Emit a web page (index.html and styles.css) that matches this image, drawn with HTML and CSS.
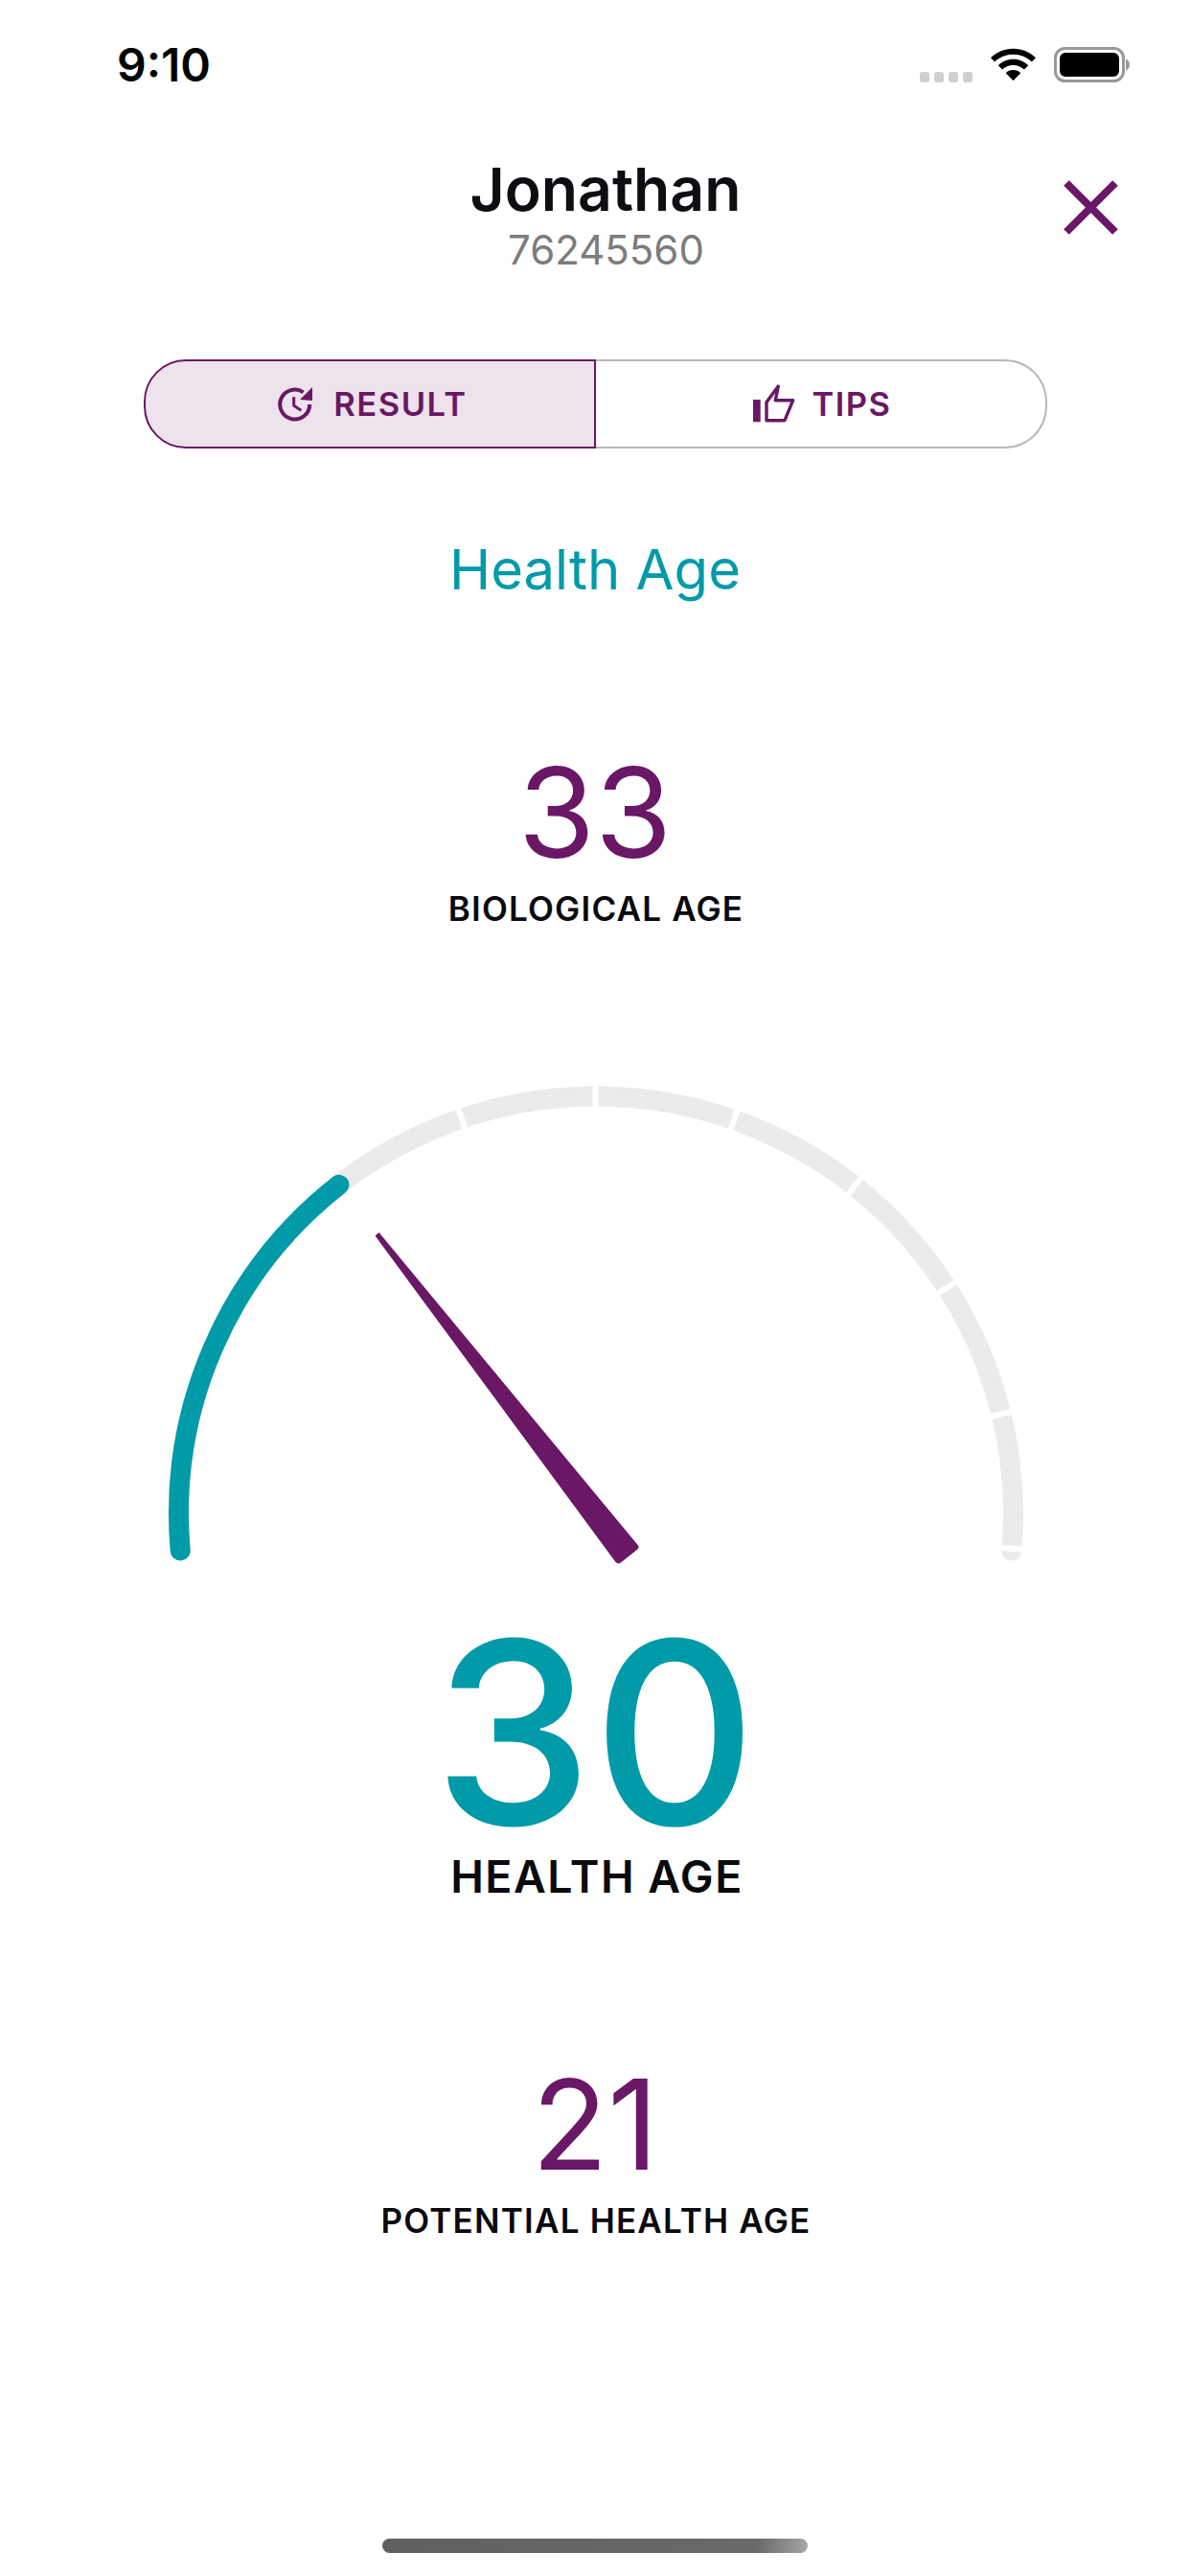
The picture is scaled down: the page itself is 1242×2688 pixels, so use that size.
FILE: index.html
```html
<!DOCTYPE html>
<html lang="en">
<head>
<meta charset="utf-8">
<title>Health Age</title>
<link rel="stylesheet" href="styles.css">
</head>
<body>
<div class="screen">
  <header class="status-bar">
    <span class="clock">9:10</span>
    <div class="status-icons">
      <svg class="signal" width="55" height="11" viewBox="0 0 55 11"><rect x="0" y="0" width="10" height="11" rx="3"/><rect x="15" y="0" width="10" height="11" rx="3"/><rect x="30" y="0" width="10" height="11" rx="3"/><rect x="45" y="0" width="10" height="11" rx="3"/></svg>
      <svg class="wifi" width="47" height="36" viewBox="0 0 46 34"><path d="M23 0C14 0 6 3.600 0 9.400L4 13.600C9 8.800 15.700 5.900 23 5.900S37 8.800 42 13.600L46 9.400C40 3.600 32 0 23 0Z"/><path d="M23 11C17 11 11.500 13.400 7.700 17.300L11.800 21.400C14.700 18.600 18.600 16.900 23 16.900S31.300 18.600 34.200 21.400L38.300 17.300C34.500 13.400 29 11 23 11Z"/><path d="M23 22C20 22 17.300 23.100 15.400 25L23 33L30.600 25C28.700 23.100 26 22 23 22Z"/></svg>
      <svg class="battery" width="79" height="37" viewBox="0 0 79 37"><rect class="battery-shell" x="1.500" y="1.500" width="71" height="34" rx="10"/><rect class="battery-level" x="6" y="6" width="62" height="25" rx="6"/><path class="battery-tip" d="M75 12.500C77.500 13.500 79 15.500 79 18.500S77.500 23.500 75 24.500Z"/></svg>
    </div>
  </header>

  <section class="profile">
    <h1 class="profile-name">Jonathan</h1>
    <p class="profile-id">76245560</p>
    <svg class="close" width="57" height="57" viewBox="0 0 57 57"><path d="M3 3L54 54M54 3L3 54"/></svg>
  </section>

  <nav class="tabs">
    <div class="tab tab-active">
      <svg class="tab-icon" width="38" height="38" viewBox="0 0 38 38"><path class="ring" d="M27.600 6.300A15.500 15.500 0 1 0 34.200 19"/><path class="solid" d="M37 1V15L24 14Z"/><path class="hands" d="M17.700 11.300V20.300L25.300 25.300"/></svg>
      <span>RESULT</span>
    </div>
    <div class="tab tab-plain">
      <svg class="tab-icon" width="46" height="42" viewBox="0 0 46 42"><rect class="solid" x="1" y="16" width="7.700" height="23.300"/><path class="thumb" d="M15 18.700L27.300 2L24.300 16.700H42.700L34 37.700H15Z"/></svg>
      <span>TIPS</span>
    </div>
  </nav>

  <h2 class="section-title">Health Age</h2>

  <div class="metric metric-biological">
    <div class="metric-value">33</div>
    <div class="metric-label">BIOLOGICAL AGE</div>
  </div>

  <div class="gauge">
    <svg width="1242" height="530" viewBox="0 1110 1242 530">
      <path class="track" d="M188.200 1618A435.500 435.500 0 1 1 1055.800 1618"/>
      <g class="ticks">
        <line x1="1040.400" y1="1614.600" x2="1070.300" y2="1617.200"/>
        <line x1="1030.200" y1="1479.300" x2="1059.300" y2="1472"/>
        <line x1="975.900" y1="1351.800" x2="1001" y2="1335.400"/>
        <line x1="883" y1="1248.800" x2="901.400" y2="1225.200"/>
        <line x1="761.500" y1="1181.900" x2="771.300" y2="1153.500"/>
        <line x1="621.500" y1="1158" x2="621.500" y2="1128"/>
        <line x1="486.500" y1="1180.500" x2="476.700" y2="1152"/>
      </g>
      <path class="progress" d="M188.200 1618A435.500 435.500 0 0 1 353.900 1236.300"/>
      <path class="needle" d="M391.500 1289.500L395.500 1286L665.500 1612Q668 1615 665 1617L648 1630.500Q645 1632.500 642.500 1630Z"/>
    </svg>
  </div>

  <div class="metric metric-health">
    <div class="metric-value">30</div>
    <div class="metric-label">HEALTH AGE</div>
  </div>

  <div class="metric metric-potential">
    <div class="metric-value">21</div>
    <div class="metric-label">POTENTIAL HEALTH AGE</div>
  </div>

  <div class="home-indicator"></div>
</div>
</body>
</html>
```
FILE: styles.css
```css
* { box-sizing: border-box; margin: 0; padding: 0; }

html, body { background: #fff; }

.screen {
  width: 1242px;
  height: 2688px;
  position: relative;
  overflow: hidden;
  font-family: Inter, "Liberation Sans", sans-serif;
  color: #0d0d12;
}

.status-bar {
  height: 132px;
  padding: 40px 63px 0 122px;
  display: flex;
  justify-content: space-between;
  align-items: flex-start;
}

.clock {
  font-size: 48px;
  line-height: 56px;
  font-weight: 600;
  color: #000;
}

.status-icons { display: flex; align-items: flex-end; gap: 19px; padding-top: 9px; }
.signal rect { fill: #cfcfcf; }
.wifi path { fill: #000; }
.battery-shell { fill: none; stroke: #999; stroke-width: 3; }
.battery-level { fill: #000; }
.battery-tip { fill: #999; }

.profile { position: relative; text-align: center; height: 243px; }

.profile-name {
  font-size: 62.500px;
  line-height: 70px;
  font-weight: 600;
  padding-top: 30px;
  height: 101px;
  margin-left: 22px;
}

.profile-id {
  font-size: 42px;
  line-height: 50px;
  color: #7c7c7c;
  padding-top: 3px;
  margin-left: 23px;
}

.close {
  position: absolute;
  top: 56px;
  left: 1110px;
}
.close path { fill: none; stroke: #6a1766; stroke-width: 8; }

.tabs {
  display: flex;
  width: 943px;
  height: 93px;
  margin-left: 150px;
}

.tab {
  display: flex;
  align-items: center;
  justify-content: center;
  font-size: 34.500px;
  font-weight: 600;
  letter-spacing: 1.500px;
  color: #6a1766;
}

.tab-active {
  flex: 0 0 472px;
  gap: 21px;
  padding-left: 5px;
  background: #eee3ec;
  border: 2px solid #6a1766;
  border-radius: 44px 0 0 44px;
}

.tab-plain {
  flex: 1;
  gap: 16px;
  padding-left: 3px;
  border: 2px solid #b8b8b8;
  border-left: 0;
  border-radius: 0 44px 44px 0;
}

.tab-icon { flex: none; }
.ring { fill: none; stroke: #6a1766; stroke-width: 4; }
.hands { fill: none; stroke: #6a1766; stroke-width: 3; }
.thumb { fill: none; stroke: #6a1766; stroke-width: 3.400; stroke-linejoin: round; }
.tab-icon .solid { fill: #6a1766; }

.section-title {
  margin-top: 91px;
  text-align: center;
  font-size: 58px;
  line-height: 70px;
  font-weight: 400;
  color: #009aa9;
}

.metric { text-align: center; }

.metric-value {
  font-weight: 400;
  color: #6a1766;
}

.metric-label {
  font-weight: 600;
  color: #0a0a0f;
  letter-spacing: 1.200px;
  padding-left: 2px;
}

.metric-biological { margin-top: 159px; }
.metric-biological .metric-value { font-size: 130px; line-height: 120px; }
.metric-biological .metric-label { font-size: 35px; line-height: 40px; margin-top: 20px; }

.gauge { height: 530px; margin-top: 142px; }
.gauge svg { display: block; }

.track { fill: none; stroke: #ebebeb; stroke-width: 21; stroke-linecap: round; }
.ticks line { stroke: #fff; stroke-width: 6; }
.progress { fill: none; stroke: #009aa9; stroke-width: 21; stroke-linecap: round; }
.needle { fill: #6a1766; }

.metric-health { margin-top: 53px; }
.metric-health .metric-value { font-size: 265px; line-height: 230px; color: #009aa9; font-weight: 500; }
.metric-health .metric-label { font-size: 46.500px; line-height: 52px; margin-top: 9px; letter-spacing: 1.500px; padding-left: 4px; }

.metric-potential { margin-top: 173px; }
.metric-potential .metric-value { font-size: 130px; line-height: 120px; }
.metric-potential .metric-label { font-size: 35px; line-height: 40px; margin-top: 20px; }

.home-indicator {
  position: absolute;
  left: 399px;
  top: 2649px;
  width: 444px;
  height: 15px;
  border-radius: 8px;
  background: linear-gradient(100deg, #606060 0%, #696969 88%, #a8a8a8 100%);
}
```
